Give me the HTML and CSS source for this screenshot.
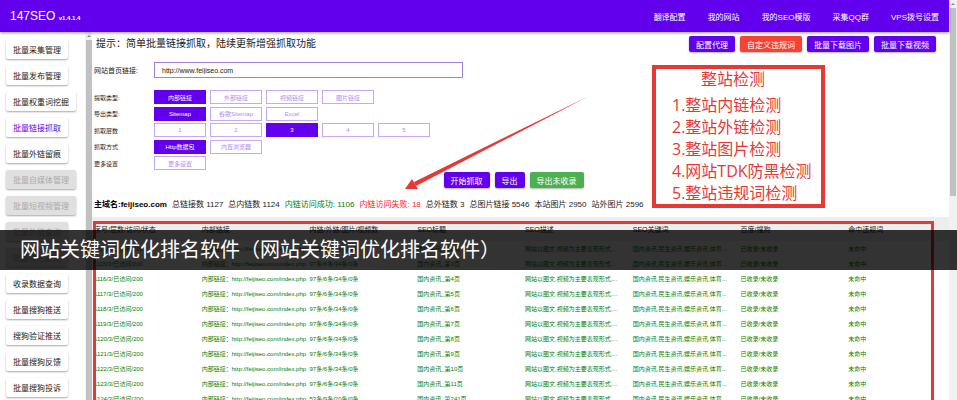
FILE: index.html
```
<!DOCTYPE html>
<html lang="zh-CN">
<head>
    <meta charset="UTF-8">
    <meta name="viewport" content="width=device-width, initial-scale=1.0">
    <title>147SEO</title>
    <link rel="stylesheet" href="styles.css">
</head>
<body>
    <div class="window">
        <div class="app">
            <header class="topbar">
                <h1 class="brand">147SEO <small>v1.4.1.4</small></h1>
                <nav class="topnav">
                    <a href="#">翻译配置</a>
                    <a href="#">我的网站</a>
                    <a href="#">我的SEO模版</a>
                    <a href="#">采集QQ群</a>
                    <a href="#">VPS拨号设置</a>
                </nav>
            </header>

            <div class="body">
                <aside class="sidebar">
                    <button>批量采集管理</button>
                    <button>批量发布管理</button>
                    <button>批量权重词挖掘</button>
                    <button class="active">批量链接抓取</button>
                    <button>批量外链留痕</button>
                    <button disabled>批量自媒体管理</button>
                    <button disabled>批量短视频管理</button>
                    <button disabled>批量外链查询</button>
                    <button disabled>批量排名查询</button>
                    <button>收录数据查询</button>
                    <button>批量搜狗推送</button>
                    <button>搜狗验证推送</button>
                    <button>批量搜狗反馈</button>
                    <button>批量搜狗投诉</button>
                </aside>
                <div class="scrollbar side-scroll">
                    <span class="arrow"></span>
                    <span class="thumb"></span>
                </div>

                <main class="main">
                    <div class="hint-row">
                        <p class="hint">提示：简单批量链接抓取，陆续更新增强抓取功能</p>
                        <div class="actions">
                            <button class="btn">配置代理</button>
                            <button class="btn red">自定义违规词</button>
                            <button class="btn">批量下载图片</button>
                            <button class="btn">批量下载视频</button>
                        </div>
                    </div>

                    <div class="field">
                        <label for="site-url">网站首页链接:</label>
                        <input type="text" id="site-url" value="http://www.feijiseo.com">
                    </div>

                    <div class="options">
                        <div class="option-row">
                            <span>提取类型:</span>
                            <button class="on">内部链接</button>
                            <button>外部链接</button>
                            <button>视频链接</button>
                            <button>图片链接</button>
                        </div>
                        <div class="option-row">
                            <span>导出类型:</span>
                            <button class="on">Sitemap</button>
                            <button>谷歌Sitemap</button>
                            <button>Excel</button>
                        </div>
                        <div class="option-row">
                            <span>抓取层数</span>
                            <button>1</button>
                            <button>2</button>
                            <button class="on">3</button>
                            <button>4</button>
                            <button>5</button>
                        </div>
                        <div class="option-row">
                            <span>抓取方式</span>
                            <button class="on">Http数据包</button>
                            <button>内置浏览器</button>
                        </div>
                        <div class="option-row">
                            <span>更多设置</span>
                            <button>更多设置</button>
                        </div>
                    </div>

                    <div class="actions run">
                        <button class="btn">开始抓取</button>
                        <button class="btn">导出</button>
                        <button class="btn green">导出未收录</button>
                    </div>

                    <div class="stats">
                        <strong>主域名:feijiseo.com</strong>
                        <span>总链接数 1127</span>
                        <span>总内链数 1124</span>
                        <span class="ok">内链访问成功: 1106</span>
                        <span class="fail">内链访问失败: 18</span>
                        <span>总外链数 3</span>
                        <span>总图片链接 5546</span>
                        <span>本站图片 2950</span>
                        <span>站外图片 2596</span>
                    </div>

                    <div class="results">
                        <table>
                            <thead>
                                <tr>
                                    <th>序号/层数/访问/状态</th>
                                    <th>内部链接</th>
                                    <th>内链/外链/图片/视频数</th>
                                    <th>SEO标题</th>
                                    <th>SEO描述</th>
                                    <th>SEO关键词</th>
                                    <th>百度/搜狗</th>
                                    <th>命中违规词</th>
                                </tr>
                            </thead>
                            <tbody id="rows"></tbody>
                        </table>
                        <div class="mark-table"></div>
                    </div>
                </main>
            </div>
        </div>

        <div class="scrollbar page-scroll">
            <span class="arrow"></span>
            <span class="thumb"></span>
        </div>

        <svg class="mark-arrow" viewBox="0 0 186 96" aria-hidden="true">
            <path d="M185 1 L12 91 L10 87 Z" fill="#e53935"/>
            <path d="M1 94 L8 84 L14 94 Z" fill="#e53935"/>
        </svg>

        <div class="mark-box">
            <h2>整站检测</h2>
            <p>1.整站内链检测</p>
            <p>2.整站外链检测</p>
            <p>3.整站图片检测</p>
            <p>4.网站TDK防黑检测</p>
            <p>5.整站违规词检测</p>
        </div>

        <div class="caption">网站关键词优化排名软件（网站关键词优化排名软件）</div>
    </div>

    <script src="script.js"></script>
</body>
</html>
```

FILE: styles.css
```
* {
    box-sizing: border-box;
}
body {
    margin: 0;
    font-family: "Liberation Sans", "Noto Sans CJK SC", sans-serif;
    font-size: 8px;
    color: #222;
    background-color: #fff;
}
h1, h2, p {
    margin: 0;
    font-weight: normal;
}
button, input {
    font-family: inherit;
    font-size: inherit;
    cursor: pointer;
}
.window {
    position: relative;
    display: flex;
    height: 100vh;
    overflow: hidden;
}
.app {
    flex: 1;
    min-width: 0;
    display: flex;
    flex-direction: column;
}

/* top bar */
.topbar {
    display: flex;
    flex: none;
    justify-content: space-between;
    align-items: center;
    height: 32px;
    padding: 0 10px;
    background-color: #6200ee;
    color: #fff;
    box-shadow: 0 1px 3px rgba(0, 0, 0, 0.4);
    z-index: 1;
}
.brand {
    font-size: 12px;
}
.brand small {
    font-size: 6px;
    font-weight: bold;
}
.topnav {
    display: flex;
    gap: 22px;
}
.topnav a {
    color: #fff;
    text-decoration: none;
}

.body {
    flex: 1;
    min-height: 0;
    display: flex;
}

/* sidebar */
.sidebar {
    display: flex;
    flex-direction: column;
    align-items: flex-start;
    gap: 7px;
    width: 85px;
    padding: 8px 6px;
    overflow: hidden;
}
.sidebar button {
    flex: none;
    height: 19px;
    padding: 0 7px;
    border: none;
    border-radius: 2px;
    background-color: #fff;
    color: #222;
    box-shadow: 0 1px 2px rgba(0, 0, 0, 0.35);
}
.sidebar button.active {
    color: #6200ee;
}
.sidebar button:disabled {
    background-color: #e0e0e0;
    color: #aaa;
}

/* scrollbars */
.scrollbar {
    display: flex;
    flex-direction: column;
    align-items: center;
    flex: none;
    background-color: #f1f1f1;
}
.scrollbar .arrow {
    margin: 3px 0;
    border: 2px solid transparent;
    border-top: none;
    border-bottom-color: #888;
}
.scrollbar .thumb {
    background-color: #c1c1c1;
}
.side-scroll {
    width: 7px;
}
.side-scroll .thumb {
    flex: 1;
    width: 6px;
}
.page-scroll {
    width: 8px;
}
.page-scroll .thumb {
    width: 6px;
    height: 47%;
}

/* main */
.main {
    flex: 1;
    min-width: 0;
    display: flex;
    flex-direction: column;
    overflow: hidden;
}
.main > * {
    flex: none;
}
.hint-row {
    display: flex;
    justify-content: space-between;
    padding: 4px 13px 0 4px;
}
.hint {
    font-size: 10px;
    line-height: 16px;
}
.actions {
    display: flex;
    gap: 5px;
}
.btn {
    height: 16px;
    padding: 0 7px;
    border: none;
    border-radius: 2px;
    background-color: #6200ee;
    color: #fff;
    box-shadow: 0 1px 2px rgba(0, 0, 0, 0.3);
}
.btn.red {
    background-color: #f44336;
}
.btn.green {
    background-color: #4caf50;
}
.field {
    display: flex;
    align-items: center;
    padding: 10px 2px 0;
    font-size: 7px;
}
.field label {
    width: 60px;
}
.field input {
    width: 309px;
    height: 16px;
    padding: 0 7px;
    border: 1px solid #a57fd8;
    color: #222;
    cursor: text;
}
.options {
    display: flex;
    flex-direction: column;
    justify-content: space-between;
    height: 80px;
    margin-top: 12px;
    padding-left: 2px;
    font-size: 6px;
}
.option-row {
    display: grid;
    grid-template-columns: 56px repeat(5, 52px);
    column-gap: 4px;
    align-items: center;
}
.option-row button {
    height: 14px;
    padding: 0;
    border: 1px solid #c9a9f5;
    background-color: #fff;
    color: #b58aef;
}
.option-row button.on {
    border-color: #6200ee;
    background-color: #6200ee;
    color: #fff;
}
.run {
    justify-content: center;
    padding-right: 14px;
    margin-top: 2px;
}
.stats {
    display: flex;
    gap: 5px;
    margin-top: 11px;
    padding-left: 2px;
    line-height: 12px;
    white-space: nowrap;
}
.stats strong {
    color: #000;
}
.ok {
    color: #008000;
}
.fail {
    color: #f22;
}

/* results */
.main .results {
    position: relative;
    flex: 1 0 0;
    margin-top: 6px;
}
table {
    width: calc(100% + 5px);
    table-layout: fixed;
    border-collapse: collapse;
}
th, td {
    padding: 0 4px 0 2px;
    text-align: left;
    font-weight: normal;
    white-space: nowrap;
    overflow: hidden;
}
th {
    height: 24px;
    font-size: 7px;
    background-color: #eee;
}
td {
    height: 15px;
    font-size: 6px;
    line-height: 10px;
    color: #008000;
}

/* red marks and caption over the page */
.mark-table {
    position: absolute;
    top: 4px;
    left: 1px;
    right: 15px;
    bottom: -4px;
    border: 3px solid #e53935;
}
.mark-arrow {
    position: absolute;
    top: 95px;
    left: 404px;
    width: 186px;
    height: 96px;
}
.mark-box {
    position: absolute;
    top: 65px;
    left: 652px;
    width: 173px;
    padding: 0 0 0 16px;
    border: 4px solid #e53935;
    color: #e53935;
    font-family: "Open Sans", "Noto Sans CJK SC", sans-serif;
    font-size: 16px;
    line-height: 22px;
}
.mark-box h2 {
    padding: 0 0 5px 29px;
    font-size: 16px;
    line-height: 20px;
}
.caption {
    position: absolute;
    top: 230px;
    left: 0;
    right: 0;
    z-index: 2;
    padding: 0 20px;
    background-color: rgba(0, 0, 0, 0.8);
    color: #fff;
    font-size: 20px;
    line-height: 40px;
}
```

FILE: script.js
```
// 每行: [序号, 数量, 标题]
const rows = [
    [1114, '97条/6条/34条/0条', '国内资讯_第2页'],
    [1115, '97条/6条/34条/0条', '国内资讯_第3页'],
    [1116, '97条/6条/34条/0条', '国内资讯_第4页'],
    [1117, '97条/6条/34条/0条', '国内资讯_第5页'],
    [1118, '97条/6条/34条/0条', '国内资讯_第6页'],
    [1119, '97条/6条/34条/0条', '国内资讯_第7页'],
    [1120, '97条/6条/34条/0条', '国内资讯_第8页'],
    [1121, '97条/6条/34条/0条', '国内资讯_第9页'],
    [1122, '97条/6条/34条/0条', '国内资讯_第10页'],
    [1123, '97条/6条/34条/0条', '国内资讯_第11页'],
    [1124, '53条/9条/20条/0条', '国内资讯_第241页']
];

const tbody = document.getElementById('rows');

rows.forEach(([id, counts, title]) => {
    const tr = document.createElement('tr');
    const cells = [
        `${id}/3/已访问/200`,
        '内部链接：http://feijiseo.com/index.php',
        counts,
        title,
        '网站以图文,视频为主要表现形式,...',
        '国内资讯,民生资讯,娱乐资讯,体育...',
        '已收录/未收录',
        '未命中'
    ];
    cells.forEach(text => {
        const td = document.createElement('td');
        td.textContent = text;
        tr.appendChild(td);
    });
    tbody.appendChild(tr);
});
```
